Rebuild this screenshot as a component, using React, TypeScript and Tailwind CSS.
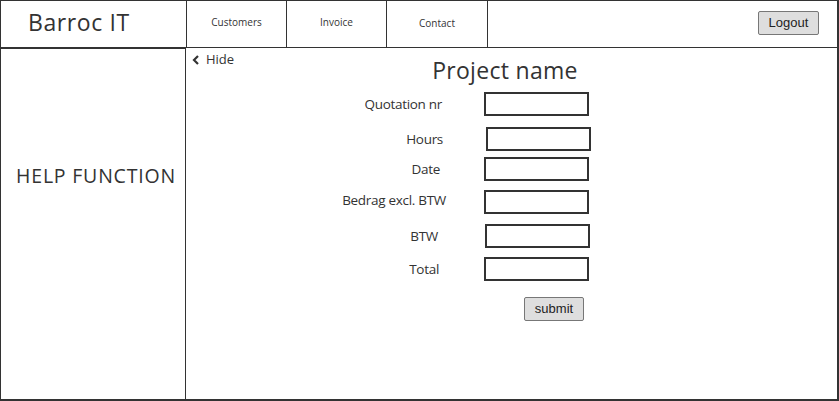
import React from "react";

const sketch = { fontFamily: '"Open Sans", "Noto Sans", sans-serif' };
const arial = { fontFamily: '"Liberation Sans", Arial, sans-serif' };

const rows: { label: string; pr: string; ml: string; mt: string }[] = [
  { label: "Quotation nr", pr: "pr-[42px]", ml: "ml-0", mt: "mt-0" },
  { label: "Hours", pr: "pr-[41px]", ml: "ml-[2px]", mt: "mt-[11px]" },
  { label: "Date", pr: "pr-[44px]", ml: "ml-0", mt: "mt-[6px]" },
  { label: "Bedrag excl. BTW", pr: "pr-[38px]", ml: "ml-0", mt: "mt-[9px]" },
  { label: "BTW", pr: "pr-[46px]", ml: "ml-[1px]", mt: "mt-[10px]" },
  { label: "Total", pr: "pr-[45px]", ml: "ml-0", mt: "mt-[9px]" },
];

export default function App() {
  return (
    <div
      className="flex h-[401px] w-[839px] flex-col border-l border-t border-r-2 border-b-2 border-[#333] bg-white text-[#333]"
      style={sketch}
    >
      <header className="flex h-[47px] shrink-0 items-stretch border-b border-[#333]">
        <div className="flex w-[186px] items-center border-r border-[#333] pl-[27px] pb-[3px] text-[23px] leading-none tracking-[0.6px]">
          Barroc IT
        </div>
        {["Customers", "Invoice", "Contact"].map((n, i) => (
          <div
            key={n}
            className={`flex justify-center border-r border-[#333] text-[10px] ${
              i === 2 ? "w-[101px] pt-[15px]" : "w-[100px] pt-[14px]"
            }`}
          >
            {n}
          </div>
        ))}
        <div className="flex flex-1 items-start justify-end pr-[18px] pt-[10px]">
          <button
            type="button"
            className="h-[24px] w-[61px] rounded-[2px] border border-[#777] bg-[#dedede] text-[13px] text-[#222]"
            style={arial}
          >
            Logout
          </button>
        </div>
      </header>

      <div className="flex flex-1">
        <aside className="flex w-[185px] items-center justify-center border-r border-t border-[#333] pb-[96px] pl-[6px] text-[19.5px] tracking-[0.8px]">
          HELP FUNCTION
        </aside>

        <main className="flex-1">
          <div className="flex h-[36px] items-start">
            <div className="ml-[6px] mt-[2px] flex items-center gap-[6px] text-[13px]">
              <svg width="8" height="10" viewBox="0 0 8 10">
                <path d="M6 1 L2 5 L6 9" fill="none" stroke="#333" strokeWidth="2.2" />
              </svg>
              <span>Hide</span>
            </div>
            <h1 className="ml-[198px] mt-[11px] text-[23px] leading-none tracking-[0.3px]">
              Project name
            </h1>
          </div>

          <div className="mt-[8px] flex flex-col">
            {rows.map((r) => (
              <div key={r.label} className={`flex items-center ${r.mt}`}>
                <span
                  className={`w-[298px] text-right text-[13.5px] font-medium leading-[16px] tracking-[-0.3px] ${r.pr} ${
                    r.label === "Bedrag excl. BTW" ? "-mt-[5px]" : ""
                  }`}
                >
                  {r.label}
                </span>
                <div className={`h-[24px] w-[105px] border-2 border-[#333] bg-white ${r.ml}`} />
              </div>
            ))}
            <div className="mt-[16px] flex">
              <button
                type="button"
                className="ml-[338px] h-[24px] w-[60px] rounded-[2px] border border-[#777] bg-[#dedede] text-[13px] text-[#222]"
                style={arial}
              >
                submit
              </button>
            </div>
          </div>
        </main>
      </div>
    </div>
  );
}
